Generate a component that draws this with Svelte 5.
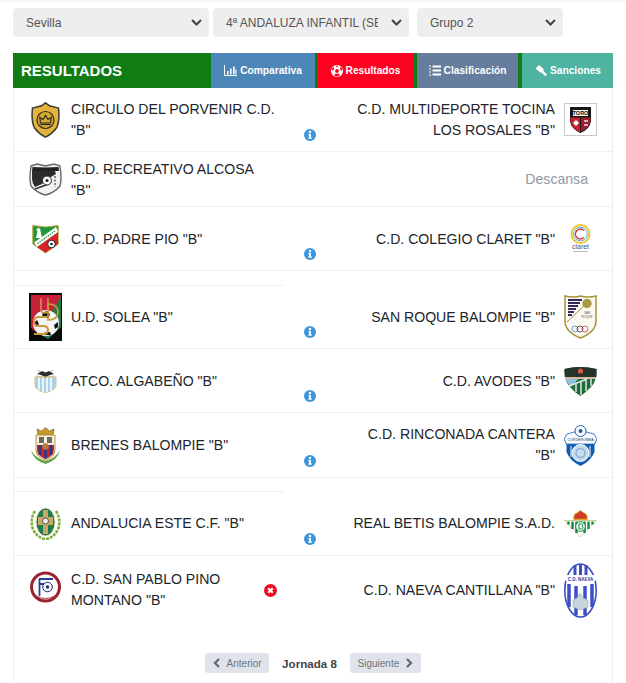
<script>
  const selects = [
    { value: 'Sevilla', cls: 'wide' },
    { value: '4ª ANDALUZA INFANTIL (SEVILLA)', cls: 'wide' },
    { value: 'Grupo 2', cls: 'narrow' }
  ];
  const rows = [
    { home: 'CIRCULO DEL PORVENIR C.D. "B"', hl: 'porvenir', away: 'C.D. MULTIDEPORTE TOCINA LOS ROSALES "B"', al: 'toro', h: 'h64', st: 'info', n: true },
    { home: 'C.D. RECREATIVO ALCOSA "B"', hl: 'recreativo', rest: true, h: 'h55', n: true },
    { home: 'C.D. PADRE PIO "B"', hl: 'pio', away: 'C.D. COLEGIO CLARET "B"', al: 'claret', h: 'h64', st: 'info', n: true },
    { spacer: 'h15' },
    { home: 'U.D. SOLEA "B"', hl: 'solea', away: 'SAN ROQUE BALOMPIE "B"', al: 'roque', h: 'h63', st: 'info' },
    { home: 'ATCO. ALGABEÑO "B"', hl: 'algabeno', away: 'C.D. AVODES "B"', al: 'avodes', h: 'h64', st: 'info', n: true },
    { home: 'BRENES BALOMPIE "B"', hl: 'brenes', away: 'C.D. RINCONADA CANTERA "B"', al: 'rinconada', h: 'h65', st: 'info' },
    { spacer: 'h14' },
    { home: 'ANDALUCIA ESTE C.F. "B"', hl: 'andalucia', away: 'REAL BETIS BALOMPIE S.A.D.', al: 'betis', h: 'h64', st: 'info' },
    { home: 'C.D. SAN PABLO PINO MONTANO "B"', hl: 'pablo', away: 'C.D. NAEVA CANTILLANA "B"', al: 'naeva', h: 'h68', st: 'x', last: true }
  ];
</script>

{#snippet logo(k)}
  {#if k === 'porvenir'}
    <svg width="29" height="36" viewBox="0 0 29 36">
      <path d="M14.500 0.800 L18.500 3.800 L27.500 6 Q29 19 25.500 26 Q21 32 14.500 35.200 Q8 32 3.500 26 Q0 19 1.500 6 L10.500 3.800Z" fill="#e3b33c" stroke="#3a3a36" stroke-width="1.500"/>
      <circle cx="14.500" cy="18" r="8.500" fill="#d9a92f" stroke="#2b2a25" stroke-width="1.200"/>
      <path d="M9.500 21 L8.800 15.500 L12 17.500 L14.500 13.500 L17 17.500 L20.200 15.500 L19.500 21Z" fill="none" stroke="#2b2a25" stroke-width="1.200"/>
      <path d="M9.500 22.500 H19.500" stroke="#2b2a25" stroke-width="1.200"/>
    </svg>
  {:else if k === 'recreativo'}
    <svg width="33" height="33" viewBox="0 0 33 33">
      <path d="M2 3 L8 1 L16.500 3 L25 1 L31 3 Q33 16 31 23 Q25 30 16.500 32 Q8 30 2 23 Q0 16 2 3Z" fill="#f2f2f0" stroke="#666" stroke-width="1.400"/>
      <path d="M3.500 4 L16.500 4.500 L29.500 4 L30 8 L3 8Z" fill="#222"/>
      <path d="M3 8 H26 L27 11 Q18 16 13 21 L6 24 Q3 20 3 16Z" fill="#2c2c2c"/>
      <path d="M6 26 L17 22 L22 19" fill="none" stroke="#333" stroke-width="1.500"/>
      <circle cx="18" cy="17.500" r="4.500" fill="#fff" stroke="#222"/>
      <circle cx="18" cy="17.500" r="1.600" fill="#222"/>
      <path d="M26 13 V24" stroke="#666" stroke-width="1.500" stroke-dasharray="2 1.500"/>
    </svg>
  {:else if k === 'pio'}
    <svg width="27" height="30" viewBox="0 0 27 30">
      <path d="M0.800 1.500 L13.500 3 L26.200 1.500 L26.200 20 L13.500 29 L0.800 20Z" fill="#1d9b3c" stroke="#c9a13a"/>
      <path d="M26 8 L26 20 L13.500 28.500 L5 23Z" fill="#d8232a"/>
      <path d="M2 18.500 L24 3 L26 8 L5 23Z" fill="#fff"/>
      <path d="M5.500 19.500 L23 7" stroke="#2b7a3a" stroke-width="1.200" stroke-dasharray="1.500 1"/>
      <path d="M4.500 14 L6 7 L8 7 L9.500 14 M5.500 7 a1.500 1.500 0 1 1 2 0" fill="#fff" stroke="#fff"/>
      <circle cx="19.500" cy="20" r="3.800" fill="#fff" stroke="#222"/>
      <circle cx="19.500" cy="20" r="1.300" fill="#222"/>
    </svg>
  {:else if k === 'solea'}
    <svg width="33" height="48" viewBox="0 0 33 48">
      <rect width="33" height="48" fill="#0a0a0a"/>
      <path d="M2 2 H32 V34 L19 46 L4 37 L2 34Z" fill="#c9203c"/>
      <path d="M32 3 V34 L19 46 L11 41 L19 26Z" fill="#1f7a45"/>
      <circle cx="17" cy="30" r="13" fill="#f4f4f4"/>
      <path d="M13 21 l4 -3 l4 3 l-1.500 4 h-5Z M5 30 l3 -3 l2 4 l-3 3Z M25 32 l4 -3 v5 l-3 2Z M16 39 h5 l1 3 h-6Z" fill="#111"/>
      <path d="M12 5 V16 Q12 20 15.500 20 Q19 20 19 16 V5" fill="none" stroke="#c79a3b" stroke-width="1.600"/>
      <path d="M19 11 Q29 11 29 19 Q29 27 19 27 V11" fill="none" stroke="#c79a3b" stroke-width="1.600"/>
      <path d="M18 24 H10 Q5 24 5 29 Q5 33 10 33 H14 Q19 33 19 37 Q19 41 14 41 H5" fill="none" stroke="#c79a3b" stroke-width="2"/>
    </svg>
  {:else if k === 'algabeno'}
    <svg width="23" height="24" viewBox="0 0 23 24">
      <path d="M1 8 H22 V17 Q20 22 11.500 23.500 Q3 22 1 17Z" fill="#a9d3ec" stroke="#d9bd7c"/>
      <path d="M5 8.500 V21 M9 8.500 V23 M13 8.500 V23 M17 8.500 V22" stroke="#fff" stroke-width="1.500"/>
      <path d="M3 5 L8 2 L11.500 3.500 L15 2 L20 5 L16 6 L11.500 8 L7 6Z" fill="#2f2f2f"/>
      <path d="M2 7 Q11.500 9.500 21 7" fill="none" stroke="#d9bd7c"/>
      <path d="M4 1 L6 3 M19 1 L17 3" stroke="#c9a860"/>
    </svg>
  {:else if k === 'brenes'}
    <svg width="31" height="37" viewBox="0 0 31 37">
      <path d="M8 8 L7 2 L11.500 4 L15.500 0.500 L19.500 4 L24 2 L23 8Z" fill="#c49a2f" stroke="#6d5113" stroke-width="0.600"/>
      <path d="M6 8 H25 V23 Q25 30 15.500 33 Q6 30 6 23Z" fill="#f5f0de" stroke="#b99a45"/>
      <path d="M9 10 h5 v6 h-5Z M17 10 h5 v6 h-5Z" fill="#6b6b58"/>
      <path d="M7 18 H24 V23 Q24 29 15.500 32 Q7 29 7 23Z" fill="#c4252e"/>
      <path d="M10 18 V28 M15.500 18 V31.500 M21 18 V28" stroke="#213a8f" stroke-width="2.600"/>
      <circle cx="15.500" cy="19.500" r="3.200" fill="#bb7a33"/>
      <path d="M1 23 Q3 33 15.500 37 Q28 33 30 23 Q26 31 15.500 34 Q5 31 1 23Z" fill="#69a24a"/>
    </svg>
  {:else if k === 'andalucia'}
    <svg width="31" height="33" viewBox="0 0 31 33">
      <ellipse cx="15.500" cy="15" rx="9.500" ry="14" fill="#1c7d4a" stroke="#e6dcbc"/>
      <path d="M13 3 h5 v7 h5 v8 h-5 v9 h-5 v-9 h-5 v-8 h5Z" fill="#c7a86b"/>
      <circle cx="15.500" cy="14" r="3" fill="#eee" stroke="#333" stroke-width="0.800"/>
      <path d="M5 4 Q0 12 2.500 21 Q6 30 15.500 32.500 Q25 30 28.500 21 Q31 12 26 4" fill="none" stroke="#84ad44" stroke-width="2.600" stroke-dasharray="3 1"/>
    </svg>
  {:else if k === 'pablo'}
    <svg width="31" height="34" viewBox="0 0 31 34">
      <circle cx="15.500" cy="17" r="14" fill="#fff" stroke="#9c2230" stroke-width="3"/>
      <path d="M9 9 H23 M9.500 9 V26 M9.500 14 H14" stroke="#253d8a" stroke-width="1.800" fill="none"/>
      <circle cx="17.500" cy="17" r="4.800" fill="#f4f6ff" stroke="#1f2e66"/>
      <circle cx="17.500" cy="17" r="1.700" fill="#1f2e66"/>
      <path d="M6 26 Q15 31 25 26" stroke="#b13b47" stroke-width="1" fill="none"/>
    </svg>
  {:else if k === 'toro'}
    <svg width="33" height="33" viewBox="0 0 33 33">
      <rect x="0.500" y="0.500" width="32" height="32" fill="#fff" stroke="#c8c8c8"/>
      <path d="M6 4 H27 V18 Q26 26 16.500 30 Q7 26 6 18Z" fill="#161616"/>
      <path d="M6.500 14.500 H16 V29.500 Q7.500 26 6.500 18Z" fill="#c62032"/>
      <path d="M17 14.500 H26.500 V18 Q25.500 25 17 29Z" fill="#9c1c2c"/>
      <rect x="9" y="7" width="15" height="6" fill="#f2f2f2"/>
      <text x="16.500" y="12.300" text-anchor="middle" class="tiny">TORO</text>
      <path d="M9 20 l3 -3 l3 3 l-3 3Z" fill="#fff"/>
      <path d="M20 18 h4 M20 22 h4" stroke="#e4e4e4" stroke-width="1.500"/>
    </svg>
  {:else if k === 'claret'}
    <svg width="21" height="29" viewBox="0 0 21 29">
      <circle cx="10.500" cy="10" r="9" fill="#fff" stroke="#f2c230" stroke-width="2"/>
      <circle cx="10.500" cy="10" r="6.800" fill="#fff" stroke="#4ea6dc" stroke-width="1"/>
      <path d="M14 6.500 A5 5 0 1 0 14 13.500" fill="none" stroke="#d8353d" stroke-width="1.300"/>
      <text x="10.500" y="25" text-anchor="middle" class="claret">claret</text>
      <path d="M3 27.500 H18" stroke="#bbb"/>
    </svg>
  {:else if k === 'roque'}
    <svg width="33" height="44" viewBox="0 0 33 44">
      <path d="M1 1 Q10 3 16.500 1 Q24 3 32 1 V26 Q32 37 16.500 43 Q1 37 1 26Z" fill="#fbfaf2" stroke="#a89236" stroke-width="1.500"/>
      <path d="M4 5 H18 M4 8 H16 M4 11 H14 M4 14 H12 M4 17 H10 M4 20 H8" stroke="#32285f" stroke-width="2"/>
      <path d="M3 27 L25 6" stroke="#a89236"/>
      <circle cx="23" cy="8.500" r="4.700" fill="#a89b48"/>
      <text x="23" y="19" text-anchor="middle" class="tiny2">SAN</text>
      <text x="23" y="23" text-anchor="middle" class="tiny2">ROQUE</text>
      <circle cx="11" cy="34" r="3" fill="none" stroke="#4d86c9" stroke-width="0.800"/>
      <circle cx="16" cy="34" r="3" fill="none" stroke="#333" stroke-width="0.800"/>
      <circle cx="21" cy="34" r="3" fill="none" stroke="#cd3b46" stroke-width="0.800"/>
    </svg>
  {:else if k === 'avodes'}
    <svg width="33" height="30" viewBox="0 0 33 30">
      <path d="M0.500 3 Q16 -1 32.500 3 Q33 15 27 21 Q21 27 16.500 30 Q11 27 6 21 Q0 15 0.500 3Z" fill="#1e6b3a"/>
      <path d="M0.500 3 Q16 -1 32.500 3 V11 H0.800Z" fill="#26332a"/>
      <circle cx="16.500" cy="5" r="2.600" fill="#d15a4a"/>
      <path d="M1 11 L16 11 L7 21 Q2 16 1 11Z" fill="#8fc1dc"/>
      <path d="M1 11 H32 V13 H1Z" fill="#d8b9a0"/>
      <path d="M5 20 L23 13" stroke="#e8e8e8" stroke-width="1.500"/>
      <path d="M12 18 V26 M17 16 V29 M22 14 V25 M27 13 V20" stroke="#cfe0d4" stroke-width="1.600"/>
    </svg>
  {:else if k === 'rinconada'}
    <svg width="33" height="41" viewBox="0 0 33 41">
      <path d="M3 9 Q16 4 30 9 L33 14 L30.500 20 V27 Q27 36 16.500 41 Q6 36 2.500 27 V20 L0 14Z" fill="#0d5cb0"/>
      <path d="M3 9 Q16 4 30 9 L33 14 L30.500 19 H2.500 L0 14Z" fill="#f6fafd" stroke="#2a72bd" stroke-width="0.800"/>
      <circle cx="16.500" cy="6" r="5.500" fill="#fff" stroke="#1d5fa8"/>
      <circle cx="16.500" cy="6" r="2" fill="#1d5fa8"/>
      <text x="16.500" y="16" text-anchor="middle" class="tiny3">CORDEROMBA</text>
      <circle cx="16.500" cy="28" r="8.500" fill="#c9dcee" stroke="#fff"/>
      <circle cx="16.500" cy="28" r="4.500" fill="none" stroke="#8fb2d4" stroke-width="1.600"/>
      <path d="M7 21 V32 M26 21 V32" stroke="#fff" stroke-width="1"/>
    </svg>
  {:else if k === 'betis'}
    <svg width="33" height="27" viewBox="0 0 33 27">
      <path d="M10 10 Q9 4 13 3 L16.500 0.500 L20 3 Q24 4 23 10Z" fill="#d33a25" stroke="#d5a824" stroke-width="1"/>
      <path d="M10 9.500 H23" stroke="#d5a824" stroke-width="1.500"/>
      <path d="M0.500 10.500 H32.500 L16.500 27Z" fill="#fff" stroke="#b9c97e" stroke-width="0.800"/>
      <path d="M4.500 11.500 V14.500 M8.500 11.500 V19 M12.500 11.500 V23 M20.500 11.500 V23 M24.500 11.500 V19 M28.500 11.500 V14.500" stroke="#0f8a3e" stroke-width="2.400"/>
      <circle cx="16.500" cy="16.500" r="4.800" fill="#fff" stroke="#0f8a3e" stroke-width="1"/>
      <path d="M15 14 V19 H17.500 Q19 19 19 17.500 Q19 16.500 18 16.500 Q18.800 16 18.800 15 Q18.800 14 17.500 14Z" fill="none" stroke="#0f8a3e"/>
    </svg>
  {:else if k === 'naeva'}
    <svg width="33" height="55" viewBox="0 0 33 55">
      <ellipse cx="16.500" cy="27.500" rx="15.700" ry="26.500" fill="#fff" stroke="#3d4fc4" stroke-width="1.600"/>
      <path d="M11 2 V12 M16.500 1 V12 M22 2 V12" stroke="#3d4fc4" stroke-width="3"/>
      <path d="M5 21 V44 M12 23 V52 M21 23 V52 M28 21 V44" stroke="#3d4fc4" stroke-width="3.500"/>
      <path d="M1 12 H32 V17 Q27 23 16.500 23 Q6 23 1 17Z" fill="#fff"/>
      <text x="16.500" y="18" text-anchor="middle" class="tiny4">C.D. NAEVA</text>
      <path d="M9 44 V37 L13 35 L16 30 L19 35 L24 37 V44 L16.500 47Z" fill="#c8d3dc" stroke="#9fb0bd" stroke-width="0.600"/>
    </svg>
  {/if}
{/snippet}

{#snippet chevron(dir)}
  <svg class="pg-chev" width="8" height="12" viewBox="0 0 8 12">
    <path d={dir === 'left' ? 'M6 2 L2 6 L6 10' : 'M2 2 L6 6 L2 10'} fill="none" stroke="#5f666d" stroke-width="2.200"/>
  </svg>
{/snippet}

<div class="page">
  <div class="topshade"></div>
  <div class="filters">
    {#each selects as s}
      <div class="sel {s.cls}">
        <select aria-label="filtro"><option>{s.value}</option></select>
        <svg class="arrow" width="11" height="7" viewBox="0 0 11 7"><path d="M1 1 L5.500 5.500 L10 1" fill="none" stroke="#444" stroke-width="2"/></svg>
      </div>
    {/each}
  </div>

  <div class="card">
    <div class="bar">
      <h1>RESULTADOS</h1>
      <a class="tab blue" href="#c">
        <svg width="13" height="11" viewBox="0 0 13 11"><path d="M0.500 0 V10.500 H13" fill="none" stroke="#fff"/><path d="M3 6 h1.600 v3.500 H3Z M6 3.500 h1.600 v6 H6Z M9 1.500 h1.600 v8 H9Z M11.300 4.500 h1.200 v5 h-1.200Z" fill="#fff"/></svg>
        Comparativa
      </a>
      <a class="tab red" href="#r">
        <svg width="12" height="12" viewBox="0 0 12 12"><circle cx="6" cy="6" r="6" fill="#fff"/><path d="M6 3.800 L8 5.300 L7.300 7.700 H4.700 L4 5.300Z M4.400 0.700 L7.600 0.700 L6 2.300Z M1 3.300 L2.900 2 L3 4.600 L1.200 6Z M11 3.300 L9.100 2 L9 4.600 L10.800 6Z M3 10.500 L4.200 8.700 L7.800 8.700 L9 10.500 L6 11.500Z" fill="#ff0020"/></svg>
        Resultados
      </a>
      <a class="tab slate" href="#l">
        <svg width="12" height="11" viewBox="0 0 12 11"><path d="M3.500 1.500 H12 M3.500 5.500 H12 M3.500 9.500 H12" stroke="#fff" stroke-width="2.200"/><path d="M1 0 V11" stroke="#fff" stroke-width="1" stroke-dasharray="2 1"/></svg>
        Clasificación
      </a>
      <a class="tab teal" href="#s">
        <svg width="13" height="12" viewBox="0 0 13 12"><path d="M5 0 L10 4.500 L7 8 L1.500 3.500Z" fill="#fff"/><path d="M7.500 5.500 L12 10.500" stroke="#fff" stroke-width="2.600"/></svg>
        Sanciones
      </a>
    </div>

    {#each rows as r}
      {#if r.spacer}
        <div class="spacer {r.spacer}"><span class="short"></span></div>
      {:else}
        <div class="row {r.h}" class:last={r.last} class:nudge={r.n}>
          <div class="home">
            <span class="crest">{@render logo(r.hl)}</span>
            <span class="name">{r.home}</span>
            {#if r.st === 'x'}
              <svg class="xmark" width="13" height="13" viewBox="0 0 13 13"><circle cx="6.500" cy="6.500" r="6.500" fill="#ee0a1f"/><path d="M4.200 4.200 L8.800 8.800 M8.800 4.200 L4.200 8.800" stroke="#fff" stroke-width="2.200"/></svg>
            {/if}
          </div>
          <div class="mid">
            {#if r.st === 'info'}
              <svg width="12" height="12" viewBox="0 0 12 12"><circle cx="6" cy="6" r="6" fill="#3a96dd"/><circle cx="6" cy="2.900" r="1.250" fill="#fff"/><path d="M4.400 5 H7 V8.500 H7.800 V9.800 H4.300 V8.500 H5.100 V6.300 H4.400Z" fill="#fff"/></svg>
            {/if}
          </div>
          {#if r.rest}
            <div class="away rest">Descansa</div>
          {:else}
            <div class="away">
              <span class="name right">{r.away}</span>
              <span class="crest">{@render logo(r.al)}</span>
            </div>
          {/if}
        </div>
      {/if}
    {/each}

    <nav class="pager">
      <a class="pg" href="#p">{@render chevron('left')}<span>Anterior</span></a>
      <strong>Jornada 8</strong>
      <a class="pg next" href="#n"><span>Siguiente</span>{@render chevron('right')}</a>
    </nav>
  </div>
</div>

<style>
  :global(body) { margin: 0; background: #fff; overflow: hidden; }
  .page { width: 626px; height: 683px; overflow: hidden; font-family: "Liberation Sans", Arial, sans-serif; color: #212529; }
  .topshade { height: 3px; margin-bottom: 5px; background: linear-gradient(#f3f3f3, #fff); }

  .filters { display: flex; gap: 4px; padding-left: 13px; margin-bottom: 16px; }
  .sel { position: relative; height: 29px; }
  .sel.wide { width: 196px; }
  .sel.narrow { width: 146px; margin-left: 4px; }
  .sel select {
    appearance: none; width: 100%; height: 100%; border: 0; border-radius: 4px; background: #eee;
    color: #555; font: 12px "Liberation Sans", Arial, sans-serif; padding: 0 31px 0 13px; outline: none;
  }
  .arrow { position: absolute; right: 7px; top: 11px; }

  .card { margin-left: 13px; width: 600px; box-sizing: border-box; border-right: 1px solid #eceef1; border-left: 1px solid #eceef1; height: 640px; position: relative; }
  .bar { display: flex; align-items: stretch; height: 35px; margin: 0 -1px; background: #107c14; }
  .bar h1 { margin: 0; width: 198px; box-sizing: border-box; padding-left: 8px; font-size: 15px; line-height: 35px; font-weight: 700; color: #fff; }
  .tab {
    display: flex; align-items: center; justify-content: center; gap: 3px; color: #fff; text-decoration: none;
    font-size: 10.200px; font-weight: 700; height: 35px;
  }
  .blue { width: 104px; background: #4d86b8; margin-right: 3px; }
  .red { width: 95px; background: #ff0021; margin-right: 4px; }
  .slate { width: 101px; background: #677d9e; margin-right: 4px; }
  .teal { width: 91px; background: #4eb3a0; }

  .row { display: flex; box-sizing: border-box; border-bottom: 1px solid #eef0f3; }
  .row.last { border-bottom: 0; }
  .h55 { height: 55px; } .h63 { height: 63px; } .h64 { height: 64px; } .h65 { height: 65px; } .h68 { height: 68px; }
  .spacer { display: flex; align-items: flex-end; box-sizing: border-box; }
  .spacer.h15 { height: 15px; } .spacer.h14 { height: 14px; }
  .short { display: block; width: 270px; border-bottom: 1px solid #eef0f3; }

  .home { width: 270px; box-sizing: border-box; display: flex; align-items: center; gap: 9px; padding: 0 7px 0 15px; }
  .row.last .home .crest { margin-top: -7px; }
  .mid { width: 52px; display: flex; align-items: flex-end; justify-content: center; padding-bottom: 10px; box-sizing: border-box; }
  .away { width: 277px; box-sizing: border-box; display: flex; align-items: center; justify-content: flex-end; gap: 9px; padding-right: 15px; }
  .away.rest { color: #8f9aa6; font-size: 14.100px; padding-right: 24px; gap: 0; }
  .crest { width: 33px; flex: none; display: flex; justify-content: center; align-items: center; }
  .crest svg { display: block; }
  .name { font-size: 14.100px; line-height: 21px; flex: 0 1 204px; }
  .nudge .name { padding-top: 1px; }
  .name.right { text-align: right; flex: 0 1 205px; }
  .row.last .home .name { flex: 1; }
  .xmark { flex: none; }

  .tiny { font: 700 5.500px "Liberation Sans", Arial, sans-serif; fill: #111; }
  .claret { font: 7px "Liberation Sans", Arial, sans-serif; fill: #555; }
  .tiny2 { font: 3px "Liberation Sans", Arial, sans-serif; fill: #555; }
  .tiny3 { font: 3.600px "Liberation Sans", Arial, sans-serif; fill: #245; }
  .tiny4 { font: 700 4.500px "Liberation Sans", Arial, sans-serif; fill: #2d3aa0; }

  .pager { display: flex; justify-content: center; align-items: center; gap: 13px; padding-top: 29px; }
  .pg { display: flex; align-items: center; justify-content: center; gap: 6px; height: 20px; width: 64px; border-radius: 3px; background: #e0e4ea; color: #6c757d; font-size: 10px; text-decoration: none; }
  .pg.next { width: 71px; }
  .pager strong { font-size: 11.600px; color: #444; font-weight: 700; }
</style>
